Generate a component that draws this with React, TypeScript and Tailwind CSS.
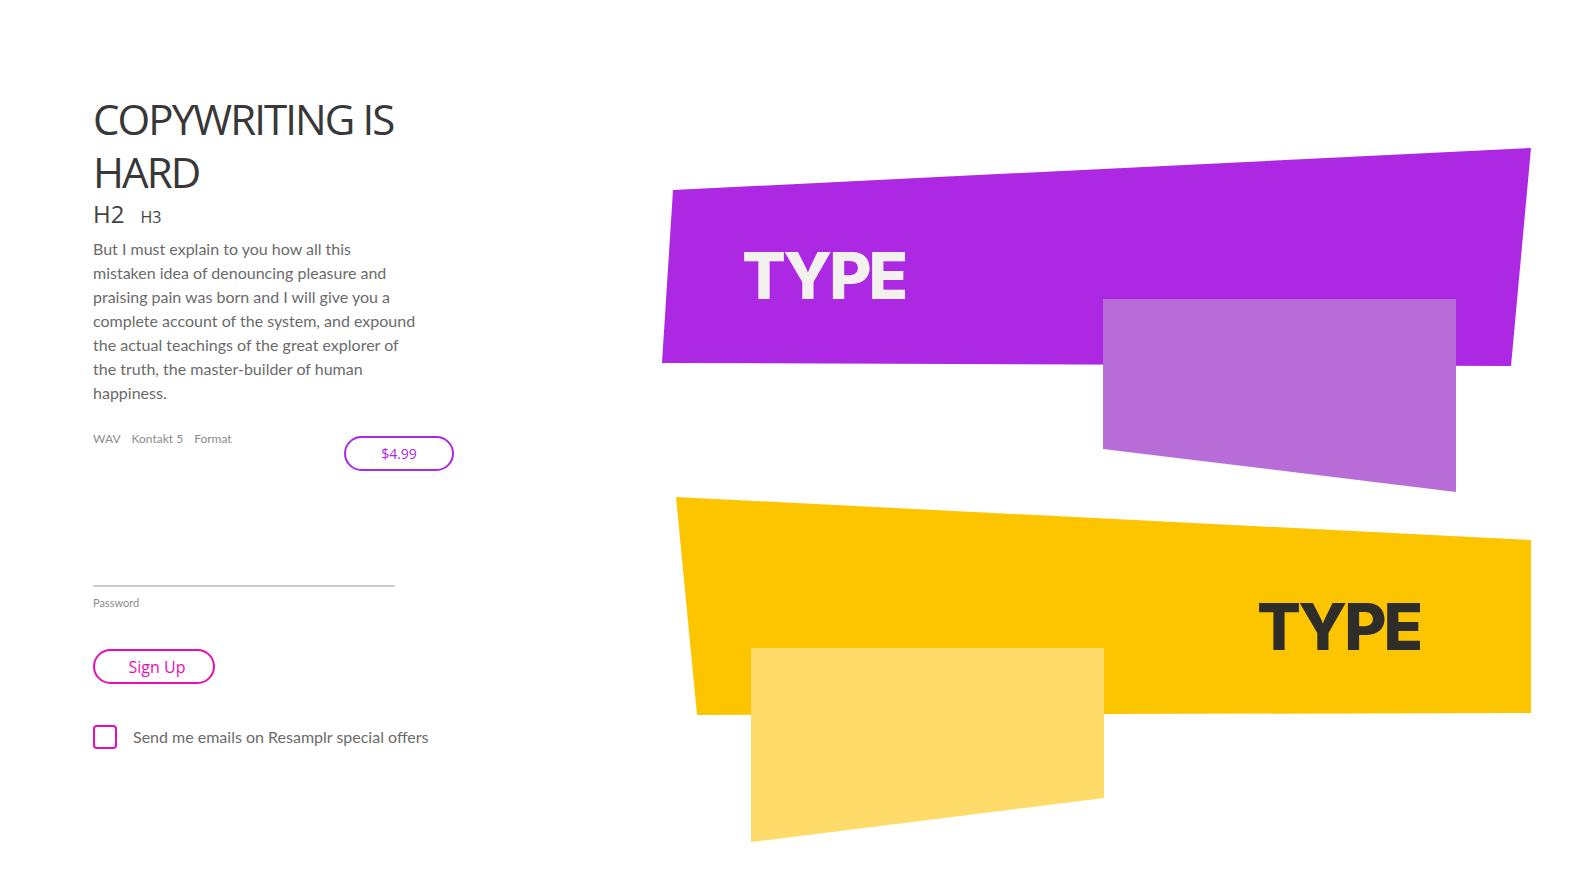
import React from "react";

const Shapes = () => {
	return (
		<div className="relative flex-1 h-[883px]">
			<svg className="absolute inset-0" width="932" height="883" viewBox="0 0 932 883">
				<polygon points="33,190 891,148 871,366 22,363" fill="#ad28e3" />
				<polygon points="463,299 816,299 816,492 463,449" fill="#b86cd7" />
				<polygon points="36,497 891,540 891,713 57,715" fill="#fdc500" />
				<polygon points="111,648 464,648 464,798 111,842" fill="#ffdc6a" />
			</svg>
			<div className="absolute left-[102px] top-[243px] font-['Inter'] font-extrabold text-[65px] leading-none tracking-[-3px] text-[#f3f1ed]">
				TYPE
			</div>
			<div className="absolute left-[617px] top-[594px] font-['Inter'] font-extrabold text-[65px] leading-none tracking-[-3px] text-[#2e2d2a]">
				TYPE
			</div>
		</div>
	);
};

const App = () => {
	return (
		<div className="flex w-full h-[883px] bg-white overflow-hidden">
			<div className="w-[640px] pl-[93px] pt-[92px]">
				<h1 className="w-[340px] font-['Open_Sans'] text-[42px] leading-[53px] tracking-[-1.9px] text-[#383838]">
					COPYWRITING IS HARD
				</h1>
				<div className="flex items-baseline gap-[16px] mt-[1px] font-['Open_Sans'] text-[#444444]">
					<span className="text-[24px] leading-[30px]">H2</span>
					<span className="text-[16px] leading-[20px]">H3</span>
				</div>
				<p className="w-[323px] mt-[8px] font-['Lato'] text-[16px] leading-[24px] text-[#6b6b6b]">
					But I must explain to you how all this mistaken idea of denouncing pleasure and praising pain was born and I will give you a complete account of the system, and expound the actual teachings of the great explorer of the truth, the master-builder of human happiness.
				</p>
				<div className="flex items-start justify-between w-[361px] mt-[27px]">
					<div className="flex gap-[11px] font-['Lato'] text-[12px] leading-[14px] text-[#8c8c8c]">
						<span>WAV</span>
						<span>Kontakt 5</span>
						<span>Format</span>
					</div>
					<button className="w-[110px] h-[35px] mt-[4px] rounded-full border-2 border-[#ad28e3] font-['Open_Sans'] text-[14px] text-[#ad28e3]">
						$4.99
					</button>
				</div>
				<div className="w-[302px] mt-[114px] border-t-2 border-[#cccccc]" />
				<div className="mt-[9px] font-['Lato'] text-[11px] leading-[14px] text-[#8c8c8c]">Password</div>
				<button className="mt-[39px] w-[122px] h-[35px] pl-[6px] rounded-full border-2 border-[#e80cb8] font-['Open_Sans'] text-[16px] text-[#e80cb8]">
					Sign Up
				</button>
				<label className="flex items-center gap-[16px] mt-[41px] font-['Lato'] text-[16px] text-[#6b6b6b]">
					<span className="w-[24px] h-[24px] rounded-[4px] border-2 border-[#e80cb8]" />
					Send me emails on Resamplr special offers
				</label>
			</div>
			<Shapes />
		</div>
	);
};

export default App;
